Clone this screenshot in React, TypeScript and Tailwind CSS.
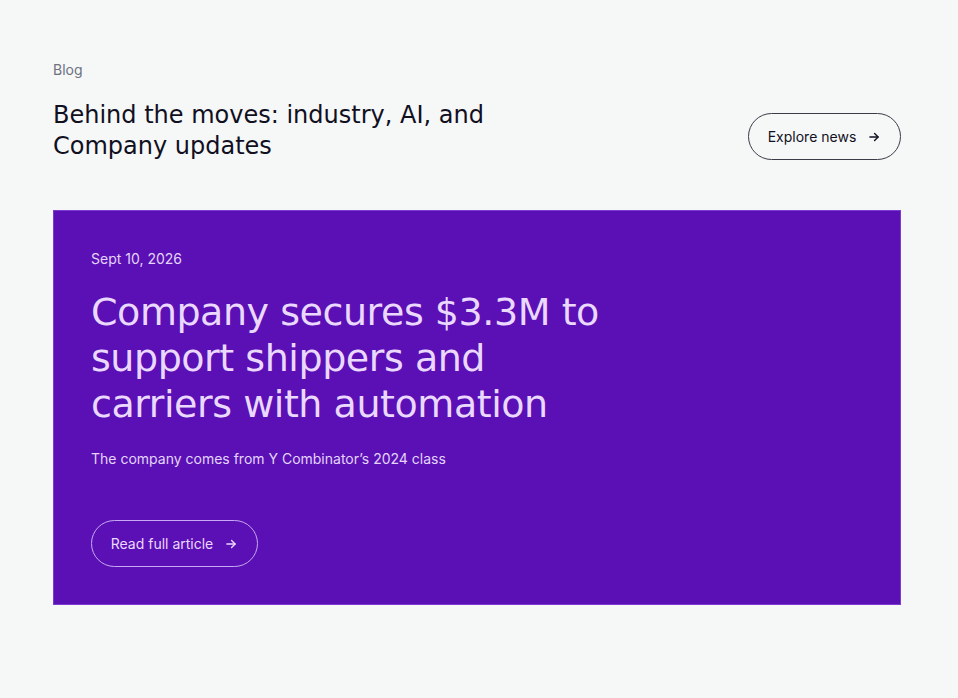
import React from "react";

function Arrow({ className }: { className?: string }) {
  return (
    <svg className={className} width="14" height="14" viewBox="0 0 24 24" fill="none" stroke="currentColor" strokeWidth="2.4" strokeLinecap="round" strokeLinejoin="round">
      <path d="M5 12h14" />
      <path d="M13 6l6 6-6 6" />
    </svg>
  );
}

export default function App() {
  const head = { fontFamily: '"DejaVu Sans", "Open Sans", sans-serif' };
  const body = { fontFamily: 'Inter, "Liberation Sans", sans-serif' };
  return (
    <div className="min-h-[698px] w-full bg-[#f6f7f7] pl-[53px] pt-[60px] pb-[93px]" style={body}>
      <div className="w-[848px]">
        <div className="flex items-end justify-between">
          <div>
            <div className="text-[14px] leading-[20px] text-[#6b7280]">Blog</div>
            <h1 className="mt-[20px] text-[24px] leading-[31px] font-normal text-[#10101f] tracking-[0px]" style={head}>
              Behind the moves: industry, AI, and
              <br />
              Company updates
            </h1>
          </div>
          <button className="mb-[2px] flex h-[47px] w-[153px] items-center justify-center gap-[11px] rounded-full border border-[#3a3d48] text-[14px] text-[#111122]">
            Explore news
            <Arrow />
          </button>
        </div>
        <div className="mt-[48px] border border-[#7c3ad0] bg-[#5a10b4] px-[37px] pt-[38px] pb-[37px]">
          <div className="text-[14px] leading-[20px] text-[#e4d4fb]">Sept 10, 2026</div>
          <h2 className="mt-[20px] text-[38px] leading-[46px] font-normal text-[#ead8ff] tracking-[-0.45px]" style={head}>
            Company secures $3.3M to
            <br />
            support shippers and
            <br />
            carriers with automation
          </h2>
          <p className="mt-[22px] text-[14px] leading-[20px] text-[#e4d4fb]">The company comes from Y Combinator’s 2024 class</p>
          <button className="mt-[51px] flex h-[47px] w-[167px] items-center justify-center gap-[11px] rounded-full border border-[#c9a8f5] text-[14px] text-[#ead8ff]">
            Read full article
            <Arrow />
          </button>
        </div>
      </div>
    </div>
  );
}
